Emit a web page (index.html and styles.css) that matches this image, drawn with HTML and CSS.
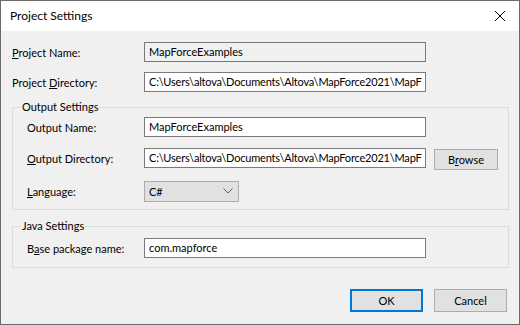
FILE: index.html
```html
<!DOCTYPE html>
<html lang="en">
<head>
  <meta charset="UTF-8" />
  <title>Project Settings</title>
  <link rel="stylesheet" href="styles.css">
</head>
<body>

  <div class="window">
    <div class="titlebar">
      <span class="title">Project Settings</span>
      <span class="close">
        <svg width="12" height="12" viewBox="0 0 12 12">
          <path d="M1 1 L11 11 M11 1 L1 11" stroke="#000" stroke-width="1" fill="none"/>
        </svg>
      </span>
    </div>

    <div class="dialog">
      <div class="row outer">
        <label><u>P</u>roject Name:</label>
        <div class="field readonly">MapForceExamples</div>
      </div>
      <div class="row outer">
        <label>Project <u>D</u>irectory:</label>
        <div class="field path">C:\Users\altova\Documents\Altova\MapForce2021\MapF</div>
      </div>

      <fieldset class="group output">
        <legend>Output Settings</legend>
        <div class="row">
          <label>Output Name:</label>
          <div class="field">MapForceExamples</div>
        </div>
        <div class="row">
          <label><u>O</u>utput Directory:</label>
          <div class="field path">C:\Users\altova\Documents\Altova\MapForce2021\MapF</div>
          <button class="btn browse">B<u>r</u>owse</button>
        </div>
        <div class="row">
          <label><u>L</u>anguage:</label>
          <div class="combo">
            <span>C#</span>
            <svg width="10" height="6" viewBox="0 0 10 6">
              <path d="M0.5 0.5 L5 5 L9.5 0.5" stroke="#606060" stroke-width="1" fill="none"/>
            </svg>
          </div>
        </div>
      </fieldset>

      <fieldset class="group java">
        <legend>Java Settings</legend>
        <div class="row">
          <label>B<u>a</u>se package name:</label>
          <div class="field">com.mapforce</div>
        </div>
      </fieldset>

      <div class="actions">
        <button class="btn default">OK</button>
        <button class="btn">Cancel</button>
      </div>
    </div>
  </div>

</body>
</html>
```

FILE: styles.css
```css
* {
  margin: 0;
  padding: 0;
  box-sizing: border-box;
}

body, html {
  width: 520px;
  height: 325px;
  overflow: hidden;
  font-family: "Lato", "Liberation Sans", sans-serif;
  font-size: 11px;
  color: #000;
  background: #f0f0f0;
}

.window {
  width: 520px;
  height: 325px;
  border: 1px solid #6b6b6b;
  display: flex;
  flex-direction: column;
}

.titlebar {
  height: 30px;
  background: #fff;
  display: flex;
  align-items: center;
  justify-content: space-between;
  padding-left: 9px;
  padding-right: 13px;
  flex-shrink: 0;
}

.title {
  font-size: 12px;
  padding-bottom: 1px;
}

.close svg {
  display: block;
}

.dialog {
  flex: 1;
  background: #f0f0f0;
  padding: 11px 10px 0 11px;
}

.row {
  display: flex;
  align-items: center;
  height: 20px;
}

.row label {
  width: 117px;
  flex-shrink: 0;
}

.row.outer label {
  width: 132px;
}

.row.outer + .row.outer {
  margin-top: 10px;
}

.field {
  width: 282px;
  flex-shrink: 0;
  height: 20px;
  line-height: 18px;
  border: 1px solid #7a7a7a;
  background: #fff;
  padding: 0 4px;
  white-space: nowrap;
  overflow: hidden;
}

.field.path {
  letter-spacing: -0.2px;
  padding-right: 0;
}

.field.readonly {
  background: #f0f0f0;
}

.group {
  border: 1px solid #dcdcdc;
  width: 497px;
  padding: 0 0 0 14px;
}

.group legend {
  font-size: 11px;
  line-height: 16px;
  margin-left: -6px;
  padding: 0 1px;
}

.output {
  margin-top: 7px;
  padding-bottom: 8px;
}

.output .row {
  margin-top: 11px;
}

.output .row:first-of-type {
  margin-top: 2px;
}

.output .row:last-of-type {
  margin-top: 13px;
}

.java {
  margin-top: 8px;
  padding-bottom: 9px;
}

.java .row {
  margin-top: 4px;
}

.combo {
  width: 95px;
  height: 21px;
  background: #e1e1e1;
  border: 1px solid #adadad;
  display: flex;
  align-items: center;
  justify-content: space-between;
  padding: 0 5px 0 4px;
}

.btn {
  font-family: inherit;
  font-size: 11px;
  color: #000;
  background: #e1e1e1;
  border: 1px solid #adadad;
  width: 73px;
  height: 23px;
}

.browse {
  width: 64px;
  height: 21px;
  margin-left: 8px;
  margin-top: 2px;
}

.btn.default {
  border: 2px solid #0078d7;
}

.actions {
  display: flex;
  justify-content: flex-end;
  gap: 11px;
  margin-top: 21px;
  padding-right: 2px;
}
```
